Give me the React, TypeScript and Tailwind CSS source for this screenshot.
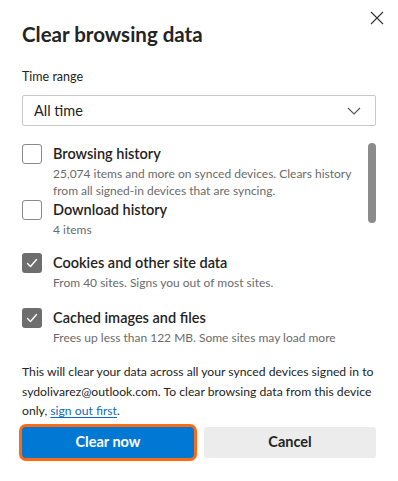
import React from "react";

function Check({ checked }: { checked: boolean }) {
  if (checked) {
    return (
      <div className="w-[20px] h-[20px] rounded-[3px] bg-[#6e6e6e] flex items-center justify-center shrink-0">
        <svg width="12" height="12" viewBox="0 0 12 12" fill="none">
          <path d="M1.5 6.5 L4.5 9.5 L10.5 2.5" stroke="white" strokeWidth="1.4" strokeLinecap="round" strokeLinejoin="round" />
        </svg>
      </div>
    );
  }
  return <div className="w-[20px] h-[20px] rounded-[3px] border border-[#8a8a8a] bg-white shrink-0" />;
}

function Item({ checked, title, lines }: { checked: boolean; title: string; lines: string[] }) {
  return (
    <div className="flex gap-[11px]">
      <Check checked={checked} />
      <div className="flex flex-col">
        <div className="text-[14.5px] leading-[20px] font-semibold text-[#242424] whitespace-nowrap">{title}</div>
        <div className="text-[12px] leading-[17px] text-[#6b6b6b] mt-[1px] whitespace-nowrap">
          {lines.map((l, i) => (
            <div key={i}>{l}</div>
          ))}
        </div>
      </div>
    </div>
  );
}

export default function App() {
  return (
    <div
      className="relative w-[398px] h-[481px] bg-white overflow-hidden"
      style={{ fontFamily: 'Lato, "Open Sans", sans-serif' }}
    >
      <button className="absolute top-[10px] right-[13px] w-[16px] h-[16px] flex items-center justify-center">
        <svg width="14" height="14" viewBox="0 0 14 14" fill="none">
          <path d="M1 1 L13 13 M13 1 L1 13" stroke="#333" strokeWidth="1.1" />
        </svg>
      </button>
      <div className="px-[22px] pt-[21px] flex flex-col">
        <div className="text-[20.5px] leading-[26px] font-bold text-[#242424]">Clear browsing data</div>
        <div className="mt-[22px] text-[12.5px] leading-[16px] text-[#242424]">Time range</div>
        <div className="mt-[10px] h-[31px] border border-[#c8c8c8] rounded-[2px] flex items-center justify-between pl-[11px] pr-[14px]">
          <span className="text-[14.5px] text-[#242424]">All time</span>
          <svg width="14" height="8" viewBox="0 0 14 8" fill="none">
            <path d="M1 1 L7 7 L13 1" stroke="#555" strokeWidth="1.1" />
          </svg>
        </div>
        <div className="relative mt-[18px] h-[210px]">
          <div className="flex flex-col pr-[24px]">
            <Item
              checked={false}
              title="Browsing history"
              lines={["25,074 items and more on synced devices. Clears history", "from all signed-in devices that are syncing."]}
            />
            <div className="mt-[1px]">
              <Item checked={false} title="Download history" lines={["4 items"]} />
            </div>
            <div className="mt-[15px]">
              <Item checked={true} title="Cookies and other site data" lines={["From 40 sites. Signs you out of most sites."]} />
            </div>
            <div className="mt-[17px]">
              <Item checked={true} title="Cached images and files" lines={["Frees up less than 122 MB. Some sites may load more"]} />
            </div>
          </div>
          <div className="absolute right-[0px] top-[-1px] w-[8px] h-[80px] rounded-full bg-[#8b8b8b]" />
        </div>
        <div className="mt-[8px] text-[12.2px] leading-[19.5px] text-[#242424] whitespace-nowrap">
          <div>This will clear your data across all your synced devices signed in to</div>
          <div>sydolivarez@outlook.com. To clear browsing data from this device</div>
          <div>
            only, <a className="text-[#0f6cbd] underline underline-offset-2">sign out first</a>.
          </div>
        </div>
        <div className="mt-[6px] flex gap-[10px]">
          <button className="flex-1 h-[31px] rounded-[4px] bg-[#0078d4] text-white text-[14.5px] font-bold ring-[3px] ring-[#ff6a13] shadow-[1px_2px_2px_rgba(0,0,0,0.35)]">
            Clear now
          </button>
          <button className="flex-1 h-[31px] rounded-[3px] bg-[#ececec] text-[#242424] text-[14.5px] font-bold">Cancel</button>
        </div>
      </div>
    </div>
  );
}
